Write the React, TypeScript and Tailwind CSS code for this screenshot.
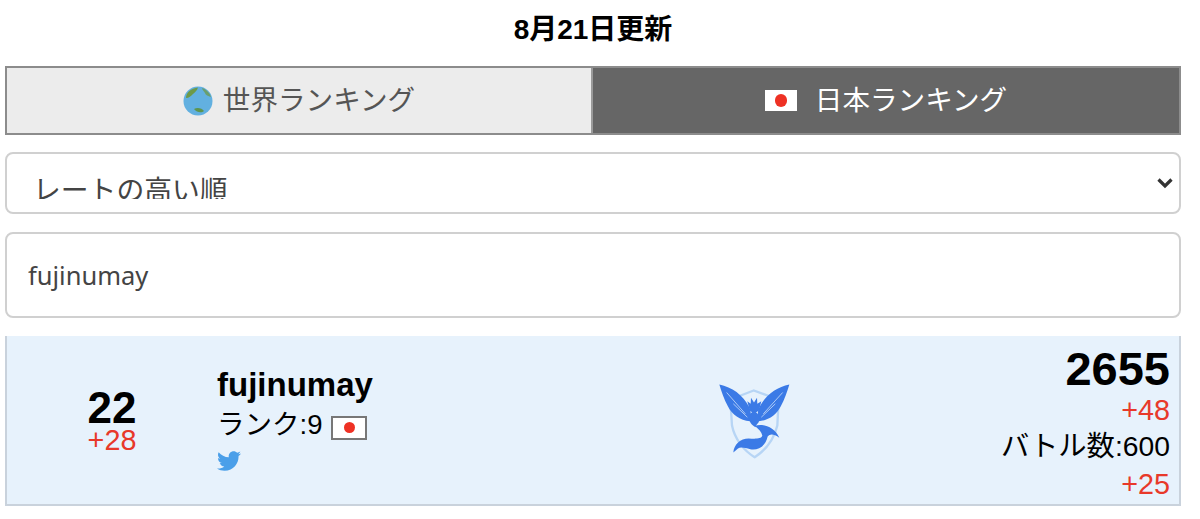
import { FaTwitter } from "react-icons/fa";

const font = { jp: "font-['Liberation_Sans','Noto_Sans_CJK_JP',sans-serif]" };

function JapanFlag({ className }: { className: string }) {
    return (
        <span className={`inline-flex items-center justify-center bg-white ${className}`}>
            <span className="aspect-square h-[58%] rounded-full bg-[#ee3124]" />
        </span>
    );
}

function Globe() {
    return (
        <svg width="30" height="30" viewBox="0 0 30 30" className="shrink-0">
            <circle cx="15" cy="15" r="14.5" fill="#62b0e0" />
            <path d="M3 12C3 7 8 2 15 1.500C14 5 12 6 10 8C8 10 6 12 3 12Z" fill="#6d9a48" />
            <path d="M19 2C23 3 27 7 28 11C26 10 23 10 22 7C21 5 19 4 19 2Z" fill="#6d9a48" opacity="0.75" />
            <path d="M11 23C14 21 19 22 21 25C19 27 14 27 11 23Z" fill="#5d9550" />
        </svg>
    );
}

function MysticLogo() {
    return (
        <svg width="75" height="77" viewBox="55 35 225 230">
            <path d="M165 60L95 87L100 165C108 205 135 240 168 260C200 240 226 205 236 165L240 87Z" fill="none" stroke="#b7d5f5" strokeWidth="7" />
            <path d="M62 42C100 50 132 72 152 110C158 124 158 138 154 152C124 150 100 132 88 108C76 86 68 62 62 42Z" fill="#3b7ae6" />
            <path d="M272 42C234 50 202 72 182 110C176 124 176 138 180 152C210 150 234 132 246 108C258 86 266 62 272 42Z" fill="#3b7ae6" />
            <path d="M84 66L140 130M104 100L146 140M252 66L194 130M230 100L188 140" stroke="#e7f2fc" strokeWidth="2" />
            <path d="M146 92L156 100L157 82L166 96L175 82L176 100L188 92L181 120L166 130L153 120Z" fill="#3b7ae6" />
            <path d="M166 122C181 128 186 142 180 155C176 161 171 163 171 170C160 165 150 152 151 140C151 132 157 125 166 122Z" fill="#3b7ae6" />
            <path d="M168 166C195 158 228 170 242 202C226 190 214 189 207 198C201 226 180 240 155 236C140 233 126 228 118 234L104 246C106 222 125 204 150 204C170 205 187 206 191 196C189 184 180 176 168 166Z" fill="#3b7ae6" />
        </svg>
    );
}

export default function App() {
    return (
        <div className={`h-[519px] overflow-hidden bg-white px-[5px] pr-[19px] text-black ${font.jp}`}>
            <div className="flex h-[66px] items-center justify-center pb-[6px] text-[28px] font-bold">8月21日更新</div>

            <div className="flex h-[69px] border-2 border-[#8c8c8c]">
                <div className="flex w-[586px] flex-none items-center justify-center gap-[10px] border-r-2 border-[#9a9a9a] bg-[#ececec] text-[27.6px] text-[#555]">
                    <Globe />
                    <span>世界ランキング</span>
                </div>
                <div className="flex flex-1 items-center justify-center gap-[18px] bg-[#666] text-[27.6px] text-white">
                    <JapanFlag className="h-[21px] w-[32px]" />
                    <span>日本ランキング</span>
                </div>
            </div>

            <div className="relative mt-[17px]">
                <select className="block h-[62px] w-full appearance-none overflow-hidden rounded-lg border-2 border-[#d0d0d0] bg-white pt-[19px] pr-10 pb-[13px] pl-[26px] text-[27.8px] leading-[36px] text-[#444]">
                    <option>レートの高い順</option>
                </select>
                <svg width="16" height="12" viewBox="0 0 16 12" className="pointer-events-none absolute top-[25px] right-[8px]">
                    <path d="M1.500 2.500L8 9L14.500 2.500" fill="none" stroke="#333" strokeWidth="3.200" />
                </svg>
            </div>

            <input
                readOnly
                value="fujinumay"
                className="mt-[18px] block h-[86px] w-full rounded-lg border-2 border-[#d0d0d0] bg-white px-[21px] text-[25.5px] text-[#444] font-['Noto_Sans',sans-serif] outline-none"
            />

            <div className="mt-[18px] flex h-[170px] items-center border-r-2 border-b-2 border-l-2 border-[#c9d2dc] bg-[#e7f2fc]">
                <div className="flex w-[210px] flex-col items-center pt-[5px]">
                    <span className="text-[44px] leading-[36px] font-bold">22</span>
                    <span className="text-[28.8px] leading-[29px] text-[#e8392a]">+28</span>
                </div>
                <div className="flex flex-col items-start pb-[3px]">
                    <span className="mb-[3px] text-[33px] leading-[40px] font-bold">fujinumay</span>
                    <span className="flex items-center gap-[9px] text-[27.5px] leading-[34px]">
                        ランク:9
                        <JapanFlag className="mt-[6px] h-[24px] w-[36px] border-2 border-[#777]" />
                    </span>
                    <FaTwitter className="mt-[7px] text-[#4a9fe9]" size={24} />
                </div>
                <div className="flex flex-1 justify-center pl-[136px]">
                    <MysticLogo />
                </div>
                <div className="flex flex-col items-end pr-[9px] pt-[6px]">
                    <span className="text-[47px] leading-[48px] font-bold">2655</span>
                    <span className="text-[28.8px] leading-[34px] text-[#e8392a]">+48</span>
                    <span className="text-[28.3px] leading-[39px]">バトル数:600</span>
                    <span className="text-[28.8px] leading-[36px] text-[#e8392a]">+25</span>
                </div>
            </div>
        </div>
    );
}
